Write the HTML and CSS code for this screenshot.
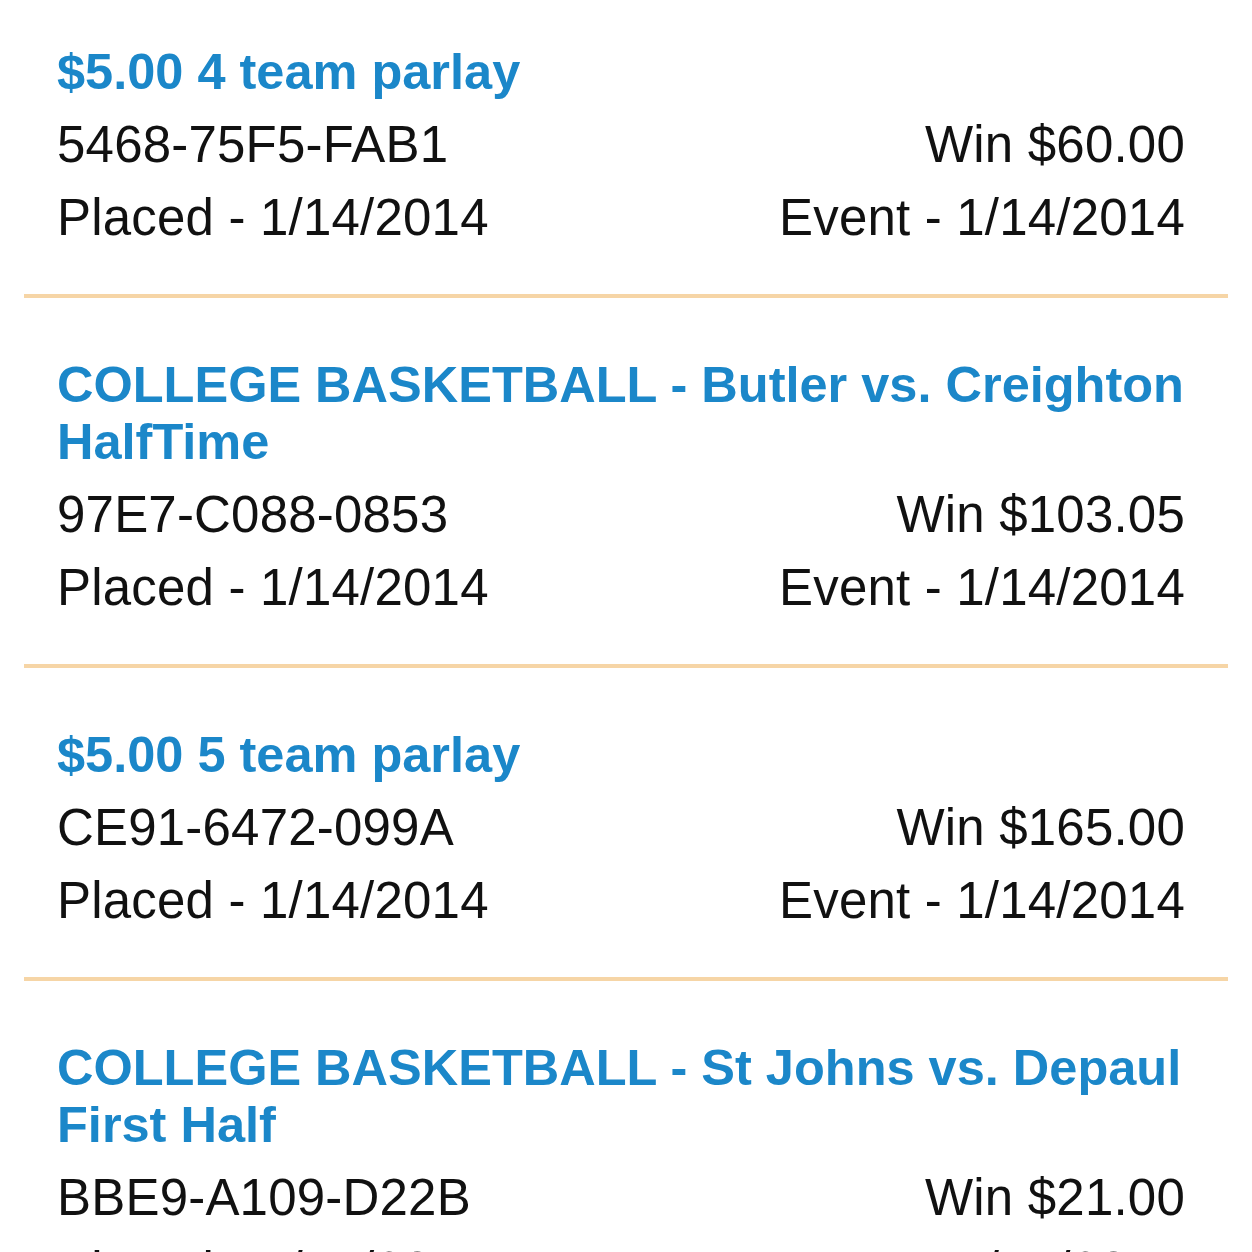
FILE: index.html
```html
<!DOCTYPE html>
<html lang="en">
<head>
    <meta charset="UTF-8">
    <meta name="viewport" content="width=device-width, initial-scale=1.0">
    <title>Open Bets</title>
    <link rel="stylesheet" href="styles.css">
</head>
<body>
    <div class="bet-list">
        <div class="bet">
            <div class="bet-title">$5.00 4 team parlay</div>
            <div class="bet-info">
                <div class="bet-row"><span>5468-75F5-FAB1</span><span>Win $60.00</span></div>
                <div class="bet-row"><span>Placed - 1/14/2014</span><span>Event - 1/14/2014</span></div>
            </div>
        </div>
        <div class="bet">
            <div class="bet-title">COLLEGE BASKETBALL - Butler vs. Creighton<br>HalfTime</div>
            <div class="bet-info">
                <div class="bet-row"><span>97E7-C088-0853</span><span>Win $103.05</span></div>
                <div class="bet-row"><span>Placed - 1/14/2014</span><span>Event - 1/14/2014</span></div>
            </div>
        </div>
        <div class="bet">
            <div class="bet-title">$5.00 5 team parlay</div>
            <div class="bet-info">
                <div class="bet-row"><span>CE91-6472-099A</span><span>Win $165.00</span></div>
                <div class="bet-row"><span>Placed - 1/14/2014</span><span>Event - 1/14/2014</span></div>
            </div>
        </div>
        <div class="bet">
            <div class="bet-title">COLLEGE BASKETBALL - St Johns vs. Depaul<br>First Half</div>
            <div class="bet-info">
                <div class="bet-row"><span>BBE9-A109-D22B</span><span>Win $21.00</span></div>
                <div class="bet-row"><span>Placed - 1/14/2014</span><span>Event - 1/14/2014</span></div>
            </div>
        </div>
    </div>
</body>
</html>
```

FILE: styles.css
```css
body {
    margin: 0;
    padding: 0;
    background-color: #ffffff;
    font-family: "Liberation Sans", Arial, sans-serif;
    color: #111111;
    overflow: hidden;
}
.bet-list {
    margin: 0 24px;
}
.bet {
    padding: 58px 43px 40px 33px;
    border-bottom: 4px solid #f6d5a6; /* light orange divider */
}
.bet:first-child {
    padding-top: 43px;
}
.bet-title {
    color: #1b87c9; /* blue heading */
    font-weight: bold;
    font-size: 50.5px;
    line-height: 57px;
    white-space: nowrap;
}
.bet-info {
    margin-top: 8px;
}
.bet-row {
    display: flex;
    justify-content: space-between;
    font-size: 51px;
    line-height: 73px;
    letter-spacing: 0.2px;
}
```
